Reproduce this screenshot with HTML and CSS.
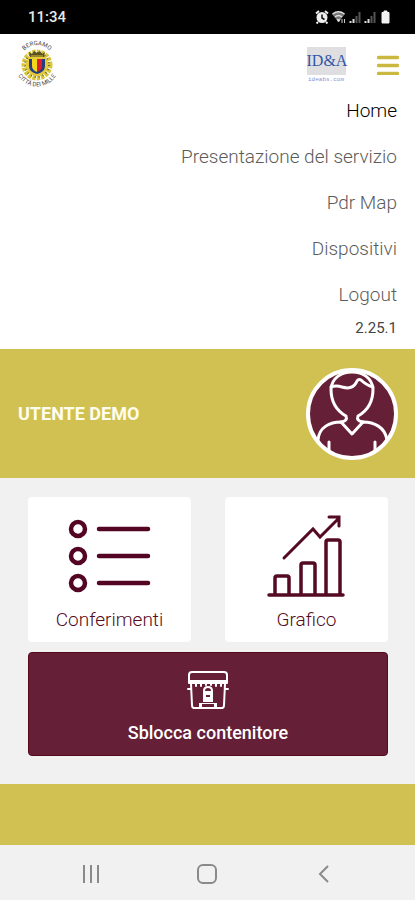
FILE: index.html
```html
<!DOCTYPE html>
<html lang="it">
<head>
<meta charset="utf-8">
<meta name="viewport" content="width=device-width, initial-scale=1">
<title>Utente Demo</title>
<link rel="stylesheet" href="styles.css">
</head>
<body>
<div class="status">
  <span class="clock">11:34</span>
  <div class="status-icons">
    <svg width="14" height="14" viewBox="0 0 14 14" aria-hidden="true">
      <circle cx="7" cy="7.500" r="5.500" fill="#eee"/>
      <path d="M1 3.500 4 1M13 3.500 10 1M3 12 1.500 13.500M11 12l1.500 1.500" stroke="#eee" stroke-width="2"/>
      <path d="M7 4.500V8l2.500 1.500" fill="none" stroke="#111" stroke-width="1.500"/>
    </svg>
    <svg width="14" height="14" viewBox="0 0 14 14" aria-hidden="true">
      <path d="M0 4Q6.500-1 13 4L6.500 12z" fill="#777"/>
      <path d="M.5 4Q6.500-.5 12.500 4M3 7q3.500-3 7 0" fill="none" stroke="#ddd" stroke-width="1.500"/>
      <path d="M5 9.500h3L6.500 12zM10 9v4M12.500 9v4" fill="#ddd" stroke="#ccc"/>
    </svg>
    <svg width="12" height="14" viewBox="0 0 12 14" aria-hidden="true">
      <path d="M1.500 11v2M4.500 9v4" stroke="#ddd" stroke-width="2"/>
      <path d="M7.500 6v7M10.500 2v11" stroke="#555" stroke-width="2"/>
    </svg>
    <svg width="12" height="14" viewBox="0 0 12 14" aria-hidden="true">
      <path d="M1.500 11v2M4.500 9v4" stroke="#ddd" stroke-width="2"/>
      <path d="M7.500 6v7M10.500 2v11" stroke="#555" stroke-width="2"/>
    </svg>
    <svg class="battery" width="9" height="14" viewBox="0 0 9 14" aria-hidden="true">
      <path d="M3 1h3v1.500h2V13H1V2.500h2z" fill="#f2f2f2" stroke="#f2f2f2"/>
    </svg>
  </div>
</div>

<header class="top">
  <svg class="crest" viewBox="0 0 40 48" role="img" aria-label="Bergamo Città dei Mille">
    <defs>
      <path id="arc-top" d="M2 21A17 17 0 0 1 36 21"/>
      <path id="arc-bottom" d="M-2 30A22 22 0 0 0 40 30"/>
    </defs>
    <circle cx="19" cy="24" r="12" fill="none" stroke="#d9c63c" stroke-width="7" stroke-dasharray="3 1"/>
    <circle cx="19" cy="24" r="11" fill="#e3cc38"/>
    <circle cx="19" cy="24" r="12" fill="none" stroke="#6f6a35" stroke-width="2" stroke-dasharray="1 3"/>
    <path d="M11 11l3 2 2-3 3 2 3-2 2 3 3-2-1 5H12z" fill="#5b5022"/>
    <path d="M13 15h12" stroke="#d8bf30" stroke-width="1"/>
    <path d="M11 18h16v7q0 6-8 8-8-2-8-8z" fill="#253c83"/>
    <path d="M14 18h5v13q-5-2-5-6z" fill="#f5d719"/>
    <path d="M19 18h5v7q0 4-5 6z" fill="#db2029"/>
    <text class="crest-text"><textPath href="#arc-top" startOffset="50%" text-anchor="middle">BERGAMO</textPath></text>
    <text class="crest-text"><textPath href="#arc-bottom" startOffset="50%" text-anchor="middle">CITTÀ DEI MILLE</textPath></text>
  </svg>
  <div class="top-right">
    <div class="brand">
      <span class="brand-name">ID&amp;A</span>
      <span class="brand-site">ideabs.com</span>
    </div>
    <button class="menu-button" type="button" aria-label="Menu">
      <svg width="22" height="20" viewBox="0 0 22 20" aria-hidden="true">
        <path d="M1.500 2.500h19M1.500 10.500h19M1.500 18.500h19" stroke="#cbb93f" stroke-width="3.500" stroke-linecap="round"/>
      </svg>
    </button>
  </div>
</header>

<nav class="menu">
  <a class="current" href="#">Home</a>
  <a href="#">Presentazione del servizio</a>
  <a href="#">Pdr Map</a>
  <a href="#">Dispositivi</a>
  <a href="#">Logout</a>
  <span class="version">2.25.1</span>
</nav>

<section class="user">
  <h1>UTENTE DEMO</h1>
  <svg class="avatar" viewBox="0 0 92 92" aria-hidden="true">
    <circle cx="46" cy="46" r="44" fill="#651f36" stroke="#fff" stroke-width="4"/>
    <g fill="none" stroke="#fff" stroke-width="3" stroke-linecap="round" stroke-linejoin="round">
      <path d="M35 54Q42 53 40 48C31 43 25 34 25 21 26 10 35 4 46 4S66 10 67 21C67 34 61 43 52 48Q50 53 57 54"/>
      <path d="M25 19Q30 17 36 19 46 22 50 15 52 10 55 12 60 17 67 19"/>
      <path d="M35 54C24 54 13 59 12 72M57 54C68 54 79 59 81 72M35 54 46 66 57 54M23 74V84M69 74V84"/>
    </g>
  </svg>
</section>

<main class="actions">
  <div class="cards">
    <button class="card" type="button">
      <svg width="84" height="82" viewBox="0 0 84 82" aria-hidden="true">
        <g fill="none" stroke="#540524" stroke-width="4.500" stroke-linecap="round">
          <circle cx="10" cy="14" r="7"/><circle cx="10" cy="41" r="7"/><circle cx="10" cy="68" r="7"/>
          <path d="M31 14h49M31 41h49M31 68h49"/>
        </g>
      </svg>
      <span>Conferimenti</span>
    </button>
    <button class="card" type="button">
      <svg width="84" height="82" viewBox="0 0 84 82" aria-hidden="true">
        <g fill="none" stroke="#540a22" stroke-width="3.500" stroke-linecap="round" stroke-linejoin="round">
          <path d="M4 80h74M10 79V63q0-2 2-2H22q2 0 2 2v16M36 79V50q0-2 2-2h10q2 0 2 2v29M61 79V27q0-2 2-2h10q2 0 2 2v52"/>
          <path stroke-width="3" stroke-linejoin="miter" d="M19 43 48 14l7 8L74 3M64 2h10v9"/>
        </g>
      </svg>
      <span>Grafico</span>
    </button>
  </div>
  <button class="unlock" type="button">
    <svg width="42" height="38" viewBox="0 0 42 38" aria-hidden="true">
      <g fill="none" stroke="#fff" stroke-width="2" stroke-linecap="round" stroke-linejoin="round">
        <path d="M2 12V4q0-3 3-3h32q3 0 3 3v8M4 13l1 21q0 3 2 3h7M38 13l-1 21q0 3-2 3h-7M1 18h3M38 18h3"/>
        <path d="M9 13v2M14 13v2M19 13v1M24 13v1M29 13v2M34 13v2M17 23v-3q0-4 4-4t4 4v3"/>
      </g>
      <path d="M2 9h38v4H2zM16 20h10v11H16zM14 32h14v1H14zM14 36h14v2H14zM12 32h3v6h-3zM27 32h3v6h-3z" fill="#fff"/>
      <path d="M19 25h4" stroke="#651f36" stroke-width="2"/>
    </svg>
    <span>Sblocca contenitore</span>
  </button>
</main>

<footer class="band"></footer>

<div class="system-nav">
  <button type="button" aria-label="Recenti">
    <svg width="20" height="20" viewBox="0 0 20 20" aria-hidden="true"><path d="M3 1v18M10 1v18M17 1v18" stroke="#8a8a8a" stroke-width="2"/></svg>
  </button>
  <button type="button" aria-label="Inizio">
    <svg width="20" height="20" viewBox="0 0 20 20" aria-hidden="true"><rect x="1" y="1" width="18" height="18" rx="5" fill="none" stroke="#8a8a8a" stroke-width="2"/></svg>
  </button>
  <button type="button" aria-label="Indietro">
    <svg width="20" height="20" viewBox="0 0 20 20" aria-hidden="true"><path d="M14 2 6 10l8 8" fill="none" stroke="#8a8a8a" stroke-width="2"/></svg>
  </button>
</div>
</body>
</html>
```
FILE: styles.css
```css
* {
  box-sizing: border-box;
}

body {
  margin: 0;
  min-height: 100vh;
  display: flex;
  flex-direction: column;
  background: #fff;
  font-family: Roboto, "Liberation Sans", sans-serif;
  font-size: 18px;
}

button {
  border: 0;
  padding: 0;
  background: none;
  font: inherit;
  color: inherit;
}

svg {
  display: block;
}

.status {
  display: flex;
  align-items: center;
  justify-content: space-between;
  height: 34px;
  padding: 0 25px 0 28px;
  background: #000;
  color: #e8e8e8;
}

.clock {
  font-size: 15px;
  font-weight: 500;
}

.status-icons {
  display: flex;
  gap: 3px;
}

.battery {
  margin-left: 2px;
}

.top {
  display: flex;
  justify-content: space-between;
  align-items: center;
  height: 61px;
  padding: 0 16px 0 18px;
}

.crest {
  width: 40px;
  height: 48px;
  overflow: visible;
}

.crest-text {
  font-size: 6px;
  fill: #444;
}

.top-right {
  display: flex;
  align-items: center;
  gap: 31px;
}

.brand {
  display: flex;
  flex-direction: column;
  align-items: center;
  width: 40px;
  padding-top: 2px;
  color: #3158a6;
}

.brand-name {
  width: 39px;
  background: #dfdfe2;
  font: 16px/28px "Liberation Serif", serif;
  text-align: center;
}

.brand-site {
  font: 6px/10px "Liberation Mono", monospace;
  color: #8b8fd0;
}

.menu {
  display: flex;
  flex-direction: column;
  align-items: flex-end;
  padding: 0 18px 6px;
}

.menu a {
  padding-bottom: 14px;
  font-size: 19px;
  font-weight: 300;
  line-height: 32px;
  color: #5c5c5c;
  text-decoration: none;
}

.menu .current {
  color: #000;
}

.menu a:last-of-type {
  padding-bottom: 2px;
}

.version {
  font-size: 15px;
  line-height: 30px;
  color: #444;
}

.user {
  display: flex;
  align-items: center;
  justify-content: space-between;
  height: 129px;
  padding: 0 17px 0 18px;
  background: #d0c152;
}

.user h1 {
  margin: 0;
  font-size: 18px;
  font-weight: 700;
  color: #fffdee;
}

.avatar {
  width: 92px;
  height: 92px;
}

.actions {
  display: flex;
  flex-direction: column;
  gap: 10px;
  padding: 19px 27px 28px 28px;
  background: #f1f1f1;
}

.cards {
  display: grid;
  grid-template-columns: 1fr 1fr;
  gap: 34px;
}

.card {
  display: flex;
  flex-direction: column;
  align-items: center;
  gap: 12px;
  padding: 18px 0 12px;
  border-radius: 4px;
  background: #fff;
  color: #540a22;
  font-size: 19px;
  font-weight: 300;
  line-height: 21px;
}

.unlock {
  display: flex;
  flex-direction: column;
  align-items: center;
  gap: 13px;
  padding: 18px 0 12px;
  border: 1px solid #540a1c;
  border-radius: 4px;
  background: #651f36;
  color: #fff;
  font-weight: 500;
  line-height: 21px;
}

.band {
  height: 61px;
  background: #d0c152;
}

.system-nav {
  flex: 1;
  display: flex;
  align-items: center;
  justify-content: space-around;
  min-height: 55px;
  padding: 2px 33px 0;
  background: #f1f1f1;
}
```
